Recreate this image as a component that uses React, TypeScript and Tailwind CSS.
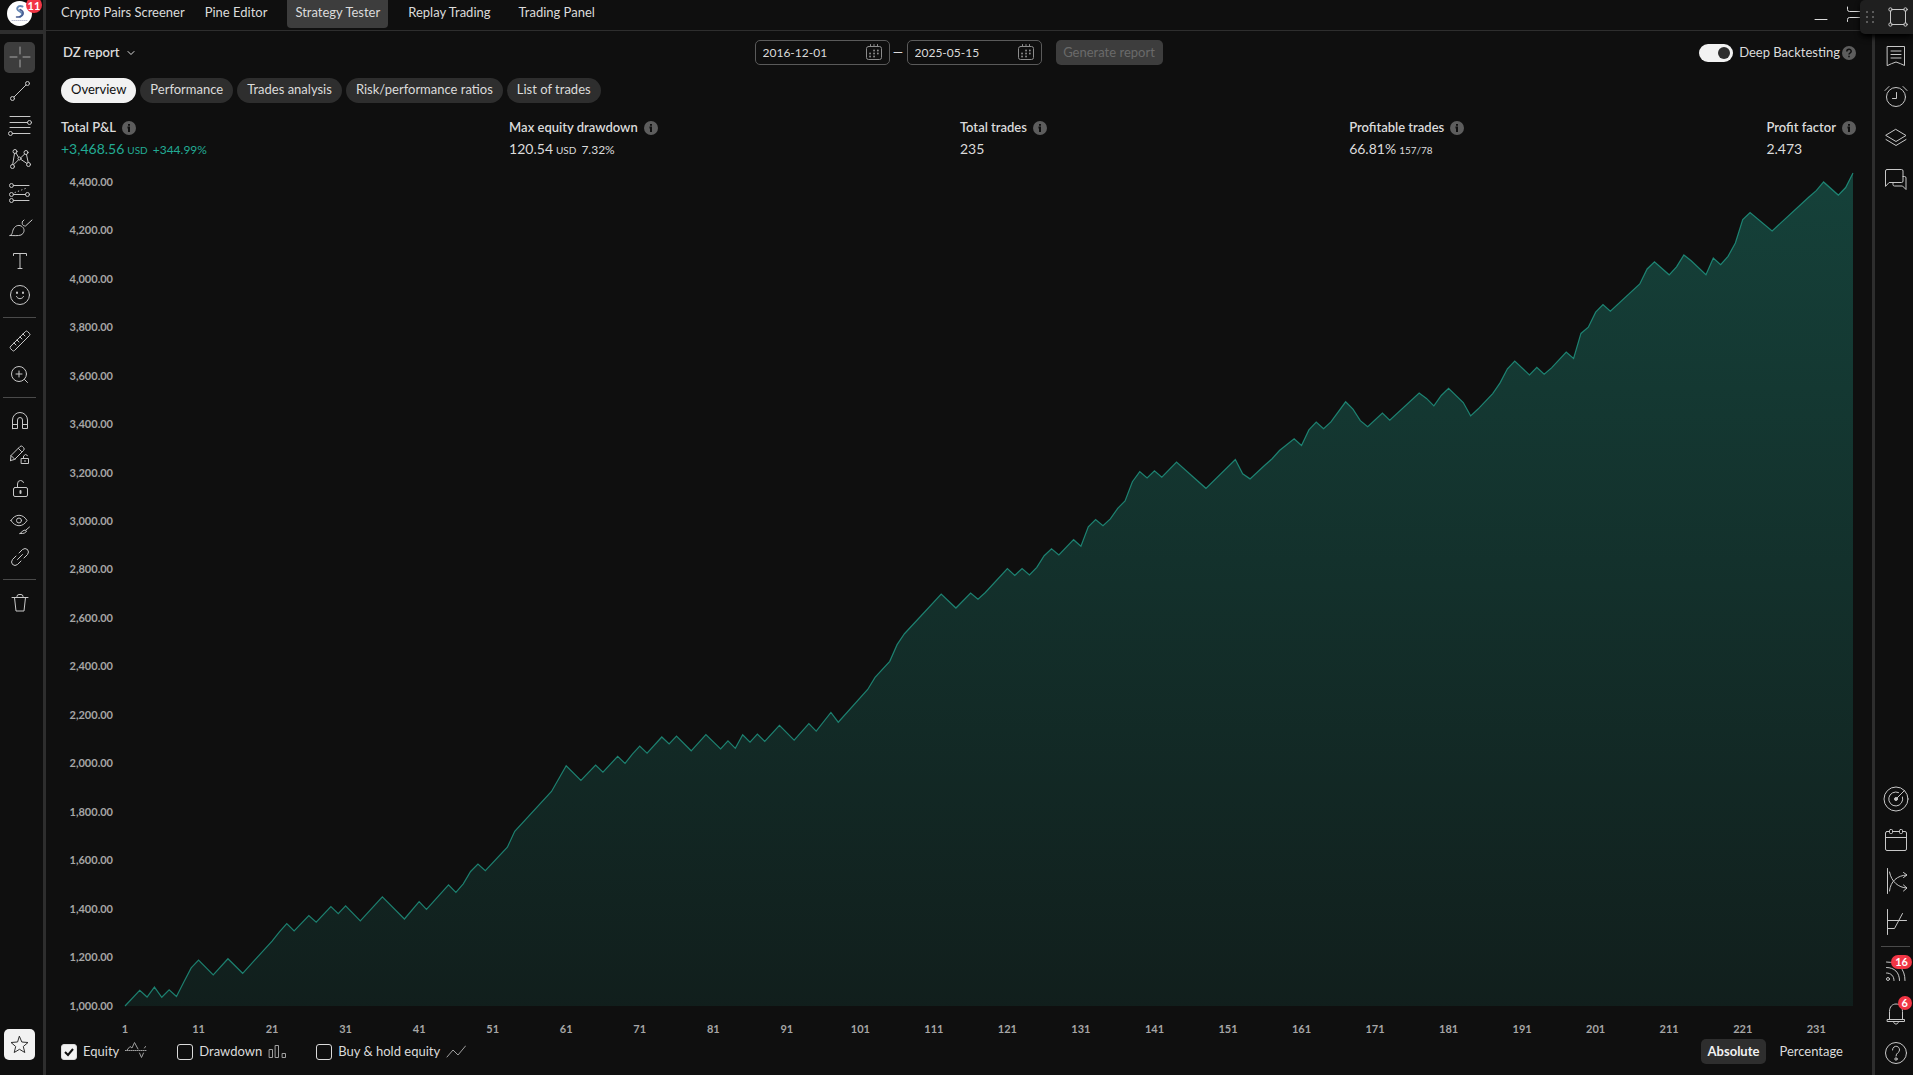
import type { ReactNode } from "react";

// [trade number, equity]; trades in between lie on a straight line
const equity = [
  [1, 1000], [3, 1065], [4, 1037], [5, 1078], [6, 1036], [7, 1067], [8, 1039], [9, 1099],
  [10, 1157], [11, 1189], [13, 1128], [15, 1195], [17, 1135], [21, 1268], [22, 1306],
  [23, 1340], [24, 1310], [26, 1373], [27, 1346], [29, 1410], [30, 1381], [31, 1413],
  [33, 1351], [36, 1450], [39, 1359], [41, 1431], [42, 1399], [45, 1500], [46, 1469],
  [47, 1504], [48, 1555], [49, 1586], [50, 1558], [53, 1655], [54, 1721], [59, 1885],
  [61, 1991], [63, 1931], [65, 1994], [66, 1965], [68, 2030], [69, 2001], [70, 2039],
  [71, 2072], [72, 2043], [74, 2110], [75, 2081], [76, 2114], [78, 2053], [80, 2120],
  [82, 2061], [83, 2094], [84, 2063], [85, 2119], [86, 2089], [87, 2122], [88, 2092],
  [90, 2158], [92, 2097], [94, 2165], [95, 2134], [97, 2211], [98, 2171], [102, 2306],
  [103, 2356], [105, 2422], [106, 2491], [107, 2536], [112, 2700], [114, 2642], [116, 2704],
  [117, 2678], [118, 2706], [121, 2805], [122, 2777], [123, 2805], [124, 2779], [125, 2810],
  [126, 2858], [127, 2886], [128, 2861], [130, 2924], [131, 2897], [132, 2977], [133, 3007],
  [134, 2982], [135, 3010], [136, 3053], [137, 3084], [138, 3163], [139, 3205], [140, 3179],
  [141, 3208], [142, 3182], [144, 3244], [148, 3136], [152, 3255], [153, 3196], [154, 3175],
  [156, 3231], [157, 3258], [158, 3292], [160, 3340], [161, 3313], [162, 3377], [163, 3409],
  [164, 3382], [165, 3410], [167, 3493], [168, 3463], [169, 3415], [170, 3390], [172, 3446],
  [173, 3417], [177, 3529], [178, 3507], [179, 3476], [180, 3519], [181, 3549], [183, 3490],
  [184, 3435], [185, 3463], [187, 3527], [188, 3571], [189, 3629], [190, 3661], [192, 3604],
  [193, 3635], [194, 3607], [195, 3633], [197, 3698], [198, 3672], [199, 3775], [200, 3801],
  [201, 3863], [202, 3894], [203, 3867], [207, 3979], [208, 4041], [209, 4071], [211, 4017],
  [212, 4050], [213, 4099], [214, 4075], [216, 4017], [217, 4086], [218, 4059], [219, 4093],
  [220, 4148], [221, 4245], [222, 4274], [225, 4198], [230, 4338], [231, 4364], [232, 4400],
  [234, 4346], [235, 4377], [236, 4437],
];

const MIN = 1000;
const MAX = 4437;
const LAST = 236;

const yTicks = Array.from({ length: 18 }, (_, i) => 4400 - i * 200);
const xTicks = Array.from({ length: 24 }, (_, i) => 1 + i * 10);

const navTabs = ["Crypto Pairs Screener", "Pine Editor", "Strategy Tester", "Replay Trading", "Trading Panel"];
const reportTabs = ["Overview", "Performance", "Trades analysis", "Risk/performance ratios", "List of trades"];

function Icon({ children, size = 28 }: { children: ReactNode; size?: number }) {
  return (
    <svg
      width={size}
      height={size}
      viewBox={`0 0 ${size} ${size}`}
      fill="none"
      stroke="currentColor"
      strokeLinecap="round"
      strokeLinejoin="round"
      className="shrink-0"
      aria-hidden="true"
    >
      {children}
    </svg>
  );
}

const drawTools: { name: string; icon: ReactNode }[][] = [
  [
    { name: "Cross", icon: <path d="M14 4v7M14 17v7M4 14h7M17 14h7" /> },
    { name: "Trend line", icon: <><circle cx="21.5" cy="6.5" r="2" /><circle cx="6.5" cy="21.5" r="2" /><path d="M8 20 20 8" /></> },
    { name: "Fib retracement", icon: <><path d="M4 5.5h20M4 11.5h17.5M4 16.5h20M6.5 22.5H24" /><circle cx="23.5" cy="11.5" r="2" /><circle cx="4.5" cy="22.5" r="2" /></> },
    { name: "XABCD pattern", icon: <><circle cx="9" cy="6.5" r="2" /><circle cx="20" cy="7.5" r="2" /><circle cx="13.5" cy="13.5" r="1.5" /><circle cx="6.5" cy="21.5" r="2" /><circle cx="22.5" cy="19.5" r="2" /><path d="m8.5 8.500-1.800 11M10 8l2.500 4.200M15 12.500l3.700-3.500M12.500 14.800l-5 5M15 14.500l6 4M20.500 9.500l1.700 8" /></> },
    { name: "Long position", icon: <><circle cx="5.5" cy="6.5" r="2" /><circle cx="5.5" cy="15.5" r="2" /><circle cx="5.5" cy="21.5" r="2" /><circle cx="21.5" cy="15.5" r="2" /><path d="M7.5 6.5H23M7.5 15.5h12M7.5 21.5H23" /><path d="m9 13.500 13-5" strokeDasharray="0.5 3" /></> },
    { name: "Brush", icon: <><path d="M4 22.500c3.500-1 1.500-4.500 4.500-8 2.500-3 6.500-2.500 8.500 0s1 6-2 7.500c-3 1-7 .5-11 .5Z" /><path d="M16.500 8.500c-1 2 0 4.500 3 4.500l6.500-6M16.500 8.500l1.500-1.500" /></> },
    { name: "Text", icon: <path d="M7.5 8.5v-2h13v2M14 6.5v15M12 21.5h4" /> },
    { name: "Icon", icon: <><circle cx="14" cy="14" r="9.5" /><path d="M10.500 15.500c1 3 6 3 7 0" /><path d="M11 11.500v.5M17 11.500v.5" strokeWidth="2" /></> },
  ],
  [
    { name: "Measure", icon: <path d="m4.500 19.500 15-15q1-1 2 0l2 2q1 1 0 2l-15 15q-1 1-2 0l-2-2q-1-1 0-2ZM8 16l2 2M11 13l2 2M14 10l2 2M17 7l2 2" /> },
    { name: "Zoom in", icon: <><circle cx="13" cy="13" r="7.5" /><path d="M13 10v6M10 13h6M18.500 18.500l3 3" /></> },
  ],
  [
    { name: "Magnet mode", icon: <path d="M6.500 21.500V13a7.500 7.500 0 0 1 15 0v8.500h-5V13a2.500 2.500 0 0 0-5 0v8.500h-5ZM6.500 17.500h5M16.500 17.500h5" /> },
    { name: "Stay in drawing mode", icon: <><path d="m4.500 19.500.5-5 9-9q1.500-1 2.500 0l1 1q1.500 1.500 0 3l-9 9-4 1ZM12.500 7.500l3 3M5 14.500l4 4" /><path d="M15.500 17.500h7v5h-7zM17.500 17.500v-2.500q2-3 4-.5M19 19.500v1" /></> },
    { name: "Lock drawings", icon: <><rect x="7.5" y="12.5" width="14" height="9" rx="1.5" /><path d="M11.500 12.500V9q0-3.500 3-3.500 2.500 0 3 2" /><path d="M14.500 16v2" strokeWidth="2" /></> },
    { name: "Hide drawings", icon: <><path d="M5 11.500c4-7 12-7 16 0-4 7-12 7-16 0Z" /><circle cx="13" cy="11.5" r="2.5" /><path d="M14 24.500q2-1 2.500-2.500 3-2 4 0-1 3-6.500 2.500ZM20 21l3.500-3" /></> },
    { name: "Sync drawings", icon: <path d="m11.500 16.500 5-5M13 10l3.500-3.500q2.500-2 5 0 2 2.500 0 5L18 15M15 18l-3.500 3.500q-2.500 2-5 0-2-2.500 0-5L10 13" /> },
  ],
  [{ name: "Remove objects", icon: <path d="M6 8.500h16M8.500 8.500l1.500 13.500h8l1.500-13.500M11 8.500v-1q0-2 2-2h2q2 0 2 2v1" /> }],
];

const railTop: { name: string; icon: ReactNode }[] = [
  { name: "Watchlist", icon: <path d="M5.500 4.500h17v19q-4-2-8.500-3.500-4.500 1.500-8.500 3.500ZM9 9h10M9 12.500h10M9 16h10" /> },
  { name: "Alerts", icon: <><circle cx="14" cy="14" r="9.5" /><path d="M14.500 9.500v6h-4M3 7.500l4-4M21 3.500l4 4" /></> },
  { name: "Data window", icon: <path d="m14 5.500 10 6-10 6-10-6ZM4 15.500l10 6 10-6" /> },
  { name: "Chats", icon: <path d="M3.500 21V6q0-1.500 1.500-1.500h14.500q1.500 0 1.500 1.500v10q0 1.500-1.500 1.500H7.500ZM21 11.500h1.500q1.500 0 1.500 1.500v11.500l-3.500-3.500h-8q-1.500 0-1.500-1.500v-2" /> },
];

const railMiddle: { name: string; icon: ReactNode }[] = [
  { name: "Screeners", icon: <><circle cx="14" cy="14" r="12" /><path d="M20.500 12a7 7 0 1 1-4-4.500M14 14l8.500-8.500" /><circle cx="14" cy="14" r="1.5" fill="currentColor" /></> },
  { name: "Calendars", icon: <><rect x="3.5" y="5.5" width="21" height="19" rx="1.5" /><path d="M3.500 11.500h21" /><rect x="7.5" y="3.5" width="3" height="4" rx="1" fill="#0f0f0f" /><rect x="17.5" y="3.5" width="3" height="4" rx="1" fill="#0f0f0f" /></> },
  { name: "Options builder", icon: <path d="M5.500 1.500v25M7.500 5c2 10 9 15.500 17 16M7.500 24c1-10 8-15.500 17-16M21.500 5.500 25 8l-3.500 2.500M21.500 18l3.500 3-3.500 3" /> },
  { name: "Strategy chart", icon: <path d="M5.500 1.500v25M5.500 12.500h19M5.500 20.500h7l8-15" /> },
];

function Info({ sign = "i" }: { sign?: "i" | "?" }) {
  return (
    <svg width="14" height="14" viewBox="0 0 14 14" fill="none" aria-hidden="true" className="shrink-0">
      <circle cx="7" cy="7" r="7" fill="#5d5d5d" />
      {sign === "i" ? (
        <path d="M7 3v1.800M5.500 6.500h1.500V11" stroke="#0f0f0f" strokeWidth="2" />
      ) : (
        <path d="M4.800 5.600c0-3 4.400-3 4.400-.3C9.200 7 7 7 7 8.600M7 9.800v1.400" stroke="#0f0f0f" strokeWidth="1.5" />
      )}
    </svg>
  );
}

function Stat({ label, children, className = "" }: { label: string; children: ReactNode; className?: string }) {
  return (
    <div>
      <dt className="flex h-5 items-center gap-1.5 text-[13px] font-semibold">
        {label}
        <Info />
      </dt>
      <dd className={`mt-px flex h-5 items-baseline gap-[3px] text-sm leading-5 ${className}`}>{children}</dd>
    </div>
  );
}

function DateField({ label, value }: { label: string; value: string }) {
  return (
    <div className="flex h-[25px] w-[135px] items-center justify-between rounded-[5px] border border-[#5a5a5a] pr-1.5 pl-[7px]">
      <input
        type="text"
        aria-label={label}
        defaultValue={value}
        className="w-20 bg-transparent text-xs outline-none"
      />
      <span className="text-[#8c8c8c]">
        <Icon size={17}>
          <rect x="0.5" y="2.5" width="15" height="13" rx="2" />
          <path d="M4.500.5v2M8 .5v2M11.500.5v2" />
          <path d="M8 6.500h.1M11.800 6.500h.1M4 9.500h.1M8 9.500h.1M11.800 9.500h.1M4 12.500h.1M8 12.500h.1" strokeWidth="1.8" />
        </Icon>
      </span>
    </div>
  );
}

function SeriesToggle({ label, checked = false, icon }: { label: string; checked?: boolean; icon: ReactNode }) {
  return (
    <label className="flex items-center gap-1.5">
      <span className="grid">
        <input
          type="checkbox"
          defaultChecked={checked}
          className="peer col-start-1 row-start-1 size-4 appearance-none rounded-[3px] border border-[#dbdbdb] checked:bg-[#f2f2f2]"
        />
        <svg
          viewBox="0 0 16 16"
          fill="none"
          stroke="#0f0f0f"
          strokeWidth="2"
          className="pointer-events-none invisible col-start-1 row-start-1 size-4 peer-checked:visible"
          aria-hidden="true"
        >
          <path d="m4 8 3 3 5-6" />
        </svg>
      </span>
      {label}
      <span className="text-[#a0a0a0]">{icon}</span>
    </label>
  );
}

function LeftToolbar() {
  return (
    <aside className="flex w-[46px] shrink-0 flex-col border-r-3 border-[#2e2e2e] text-[#c8c8c8]">
      <div className="flex h-[34px] shrink-0 justify-center border-b-4 border-[#2e2e2e] pr-1">
        <button type="button" aria-label="Account" className="relative mt-px size-[25px] rounded-full bg-white">
          <svg viewBox="0 0 25 25" fill="none" strokeWidth="2" strokeLinecap="round" aria-hidden="true">
            <path d="M15.500 5.500c-5-1.500-7 2.500-3.500 4.500s4.500 3.500 1 6" stroke="#6587b5" />
            <path d="M13 8.500c4 2 5 6-1.500 7.500H9.500" stroke="#46598f" strokeWidth="1.5" />
            <path d="M5 19.500h15" stroke="#b9bdd0" strokeWidth="1" strokeDasharray="1 1" />
          </svg>
          <span className="absolute -top-1 -right-2.5 flex h-4 w-4 items-center justify-center rounded-full bg-[#f23645] text-[11px] leading-none font-bold text-white">
            11
          </span>
        </button>
      </div>
      <div className="flex flex-1 flex-col pt-1.5 pr-1">
        {drawTools.map((group, i) => (
          <div key={i} className="flex flex-col items-center">
            {i > 0 && <hr className="mt-[5px] mb-1.5 w-[33px] border-[#4a4a4a]" />}
            {group.map((tool) => (
              <button key={tool.name} type="button" aria-label={tool.name} className="flex h-[34px] items-center">
                <span
                  className={`flex h-[31px] w-[31px] items-center justify-center rounded-[5px] ${
                    tool.name === "Cross" ? "bg-[#3d3d3d] text-[#a8a8a8]" : ""
                  }`}
                >
                  <Icon>{tool.icon}</Icon>
                </span>
              </button>
            ))}
          </div>
        ))}
        <button
          type="button"
          aria-label="Favorite tools"
          className="mt-auto mb-[15px] flex size-[31px] items-center justify-center self-center rounded-[5px] bg-[#f2f2f2] text-[#2e2e2e]"
        >
          <Icon size={19}>
            <path d="m9.500 1.500 2.300 5.500 6.200.5-4.700 4 1.500 6-5.300-3.200-5.300 3.200 1.500-6L1 7.500 7.200 7Z" />
          </Icon>
        </button>
      </div>
    </aside>
  );
}

function RailButton({ name, badge, children }: { name: string; badge?: number; children: ReactNode }) {
  return (
    <button type="button" aria-label={name} className="relative flex h-[41px] items-center justify-center pl-[3px]">
      <Icon>{children}</Icon>
      {badge && (
        <span className="absolute top-[5px] right-px flex h-[14px] min-w-[14px] items-center justify-center rounded-full bg-[#f23645] px-1 text-[11px] font-bold text-white">
          {badge}
        </span>
      )}
    </button>
  );
}

function RightRail() {
  return (
    <aside className="flex w-[41px] shrink-0 flex-col border-l-3 border-[#2e2e2e] pt-[35px] pb-0.5 text-[#c8c8c8]">
      {railTop.map((item) => (
        <RailButton key={item.name} name={item.name}>{item.icon}</RailButton>
      ))}
      <div className="flex-1" />
      {railMiddle.map((item) => (
        <RailButton key={item.name} name={item.name}>{item.icon}</RailButton>
      ))}
      <hr className="mt-1 mb-[3px] ml-[6px] w-[29px] border-[#4a4a4a]" />
      <RailButton name="Ideas stream" badge={16}>
        <circle cx="6" cy="22" r="1.5" />
        <path d="M4.500 16c4.500 0 7.500 3 7.500 7.500M4.500 10.500c8 0 13 5 13 13M4.500 5c12 0 18.500 7 18.500 18.500" />
      </RailButton>
      <RailButton name="Notifications" badge={6}>
        <path d="M7.500 21v-7.500c0-5 3-7.500 6.500-7.500s6.500 2.500 6.500 7.500V21M5.500 21.500h17v2h-17zM11.500 23.500c0 3.500 5 3.500 5 0" />
      </RailButton>
      <RailButton name="Help">
        <circle cx="14" cy="14" r="10.5" />
        <path d="M10.500 11c0-5 7-5 7 0 0 3-3.500 2.500-3.500 6" />
        <circle cx="14" cy="20" r="1.2" />
      </RailButton>
    </aside>
  );
}

function EquityChart() {
  const line = equity.map(([n, v]) => `${n - 1},${MAX - v}`).join(" ");
  return (
    <div className="flex min-h-0 flex-1 flex-col pt-[14px] pr-[3px] text-[11px] font-bold text-[#a6a6a6]">
      <div className="flex min-h-0 flex-1">
        <div
          className="flex w-[52px] shrink-0 flex-col justify-between self-end"
          style={{ height: `${((4400 - MIN) / (MAX - MIN)) * 100}%` }}
        >
          {yTicks.map((t) => (
            <span key={t} className="flex h-0 items-center justify-end">
              {t.toLocaleString("en-US", { minimumFractionDigits: 2 })}
            </span>
          ))}
        </div>
        <div className="ml-3 min-h-0 flex-1">
          <svg
            viewBox={`0 0 ${LAST - 1} ${MAX - MIN}`}
            preserveAspectRatio="none"
            className="block h-full w-full overflow-visible"
            role="img"
            aria-label="Equity"
          >
            <defs>
              <linearGradient id="equity-fill" x1="0" y1="0" x2="0" y2="1">
                <stop offset="0" stopColor="#22ab94" stopOpacity="0.32" />
                <stop offset="1" stopColor="#22ab94" stopOpacity="0.1" />
              </linearGradient>
            </defs>
            <polygon points={`0,${MAX - MIN} ${line} ${LAST - 1},${MAX - MIN}`} fill="url(#equity-fill)" />
            <polyline
              points={line}
              fill="none"
              stroke="#22ab94"
              strokeOpacity="0.7"
              strokeWidth="1.2"
              vectorEffect="non-scaling-stroke"
            />
          </svg>
        </div>
      </div>
      <div className="ml-16 pt-[15px]">
        <div className="flex h-4 justify-between" style={{ width: `${(230 / (LAST - 1)) * 100}%` }}>
          {xTicks.map((t) => (
            <span key={t} className="flex w-0 items-center justify-center">{t}</span>
          ))}
        </div>
      </div>
    </div>
  );
}

export default function App() {
  return (
    <div className="relative flex h-screen overflow-hidden bg-[#0f0f0f] font-['Lato','Liberation_Sans',sans-serif] text-[13px] text-[#dbdbdb]">
      <LeftToolbar />
      <main className="flex min-w-0 flex-1 flex-col">
        <nav className="flex h-[31px] shrink-0 items-start border-b border-[#2e2e2e] pl-[7px]">
          <div className="flex flex-1 gap-3">
            {navTabs.map((tab) => (
              <button
                key={tab}
                type="button"
                className={`h-7 rounded-b-[4px] px-2 pb-[3px] first:pr-0 ${tab === "Strategy Tester" ? "bg-[#3d3d3d]" : ""}`}
              >
                {tab}
              </button>
            ))}
          </div>
          <button type="button" aria-label="Minimize" className="mr-[18px] flex h-[27px] items-center">
            <Icon size={14}><path d="M1 12.500h12" /></Icon>
          </button>
          <button type="button" aria-label="Maximize" className="flex h-[27px] items-center">
            <Icon size={26}>
              <path d="M1.500 6v2.500q0 2 2 2h19q2 0 2-2V6M1.500 20.500v-2q0-2 2-2h19q2 0 2 2v2" />
            </Icon>
          </button>
        </nav>

        <div className="flex min-h-0 flex-1 flex-col pt-[9px] pr-4 pb-[11px] pl-[15px]">
          <header className="grid grid-cols-[1fr_auto_1fr] items-center">
            <button type="button" className="flex items-center gap-[7px] justify-self-start pl-0.5 font-semibold">
              DZ report
              <Icon size={8}><path d="m1 2.500 3 3 3-3" /></Icon>
            </button>
            <div className="flex items-center">
              <DateField label="Start date" value="2016-12-01" />
              <span className="w-[17px] text-center">—</span>
              <DateField label="End date" value="2025-05-15" />
              <button
                type="button"
                disabled
                className="ml-[14px] h-[25px] w-[107px] rounded-[5px] bg-[#3d3d3d] text-[#6a6a6a]"
              >
                Generate report
              </button>
            </div>
            <label className="flex items-center gap-1.5 justify-self-end">
              <span className="grid items-center">
                <input
                  type="checkbox"
                  role="switch"
                  defaultChecked
                  className="peer col-start-1 row-start-1 h-[18px] w-[34px] appearance-none rounded-full bg-[#4a4a4a] checked:bg-[#f2f2f2]"
                />
                <span className="pointer-events-none col-start-1 row-start-1 ml-[3px] size-3 rounded-full bg-[#2e2e2e] peer-checked:ml-[19px]" />
              </span>
              Deep Backtesting
              <span className="-ml-1"><Info sign="?" /></span>
            </label>
          </header>

          <div className="mt-[13px] flex gap-1">
            {reportTabs.map((tab) => (
              <button
                key={tab}
                type="button"
                className={`h-[25px] rounded-full px-2.5 pb-0.5 ${
                  tab === "Overview" ? "bg-[#f2f2f2] text-[#0f0f0f]" : "bg-[#2e2e2e]"
                }`}
              >
                {tab}
              </button>
            ))}
          </div>

          <dl className="mt-[15px] flex justify-between">
            <Stat label="Total P&L" className="text-[#22ab94]">
              +3,468.56 <small className="text-[10px]">USD</small>
              <span className="ml-0.5 text-xs">+344.99%</span>
            </Stat>
            <Stat label="Max equity drawdown">
              120.54 <small className="text-[10px]">USD</small>
              <span className="ml-0.5 text-xs">7.32%</span>
            </Stat>
            <Stat label="Total trades">235</Stat>
            <Stat label="Profitable trades">
              66.81% <small className="text-[10px]">157/78</small>
            </Stat>
            <Stat label="Profit factor">2.473</Stat>
          </dl>

          <EquityChart />

          <footer className="mt-0.5 flex h-[25px] items-center justify-between">
            <div className="flex items-center gap-[30px]">
              <SeriesToggle
                label="Equity"
                checked
                icon={
                  <Icon size={22}>
                    <path d="M0 9.500h22" strokeDasharray="1 1" />
                    <path d="m2 9 3-3.500 2 1.500 2.500-5.500L13 8M14.500 12l2 4.500 2-4.500M19.500 7l1-1.500" />
                  </Icon>
                }
              />
              <SeriesToggle
                label="Drawdown"
                icon={<Icon size={18}><path d="M1.500 6.500h3v8h-3zM7.500 2.500h3v12h-3zM14.500 10.500h3v4h-3z" /></Icon>}
              />
              <SeriesToggle
                label="Buy & hold equity"
                icon={<Icon size={20}><path d="m1 15 6-7 5 5L19.500 4" /></Icon>}
              />
            </div>
            <div className="flex">
              <button type="button" className="h-[25px] rounded-[5px] bg-[#2e2e2e] px-[7px] font-bold text-[#f2f2f2]">
                Absolute
              </button>
              <button type="button" className="h-[25px] px-[13px]">Percentage</button>
            </div>
          </footer>
        </div>
      </main>
      <RightRail />

      {/* floating favourites bar, dragged partly off the right edge */}
      <div className="absolute top-0 right-0 flex h-[34px] w-[53px] items-center gap-[13px] overflow-hidden rounded-l-[5px] bg-[#1f1f1f] pl-1.5 text-[#c8c8c8] shadow-md shadow-black">
        <svg width="8" height="12" viewBox="0 0 8 12" fill="#5a5a5a" className="shrink-0" aria-hidden="true">
          <path d="M0 0h2v2H0zM6 0h2v2H6zM0 5h2v2H0zM6 5h2v2H6zM0 10h2v2H0zM6 10h2v2H6z" />
        </svg>
        <button type="button" aria-label="Rectangle">
          <Icon size={22}>
            <path d="M5 3.500h12M5 18.500h12M3.500 5v12M18.500 5v12" />
            <circle cx="3.5" cy="3.5" r="1.7" />
            <circle cx="18.5" cy="3.5" r="1.7" />
            <circle cx="3.5" cy="18.5" r="1.7" />
            <circle cx="18.5" cy="18.5" r="1.7" />
          </Icon>
        </button>
      </div>
    </div>
  );
}
